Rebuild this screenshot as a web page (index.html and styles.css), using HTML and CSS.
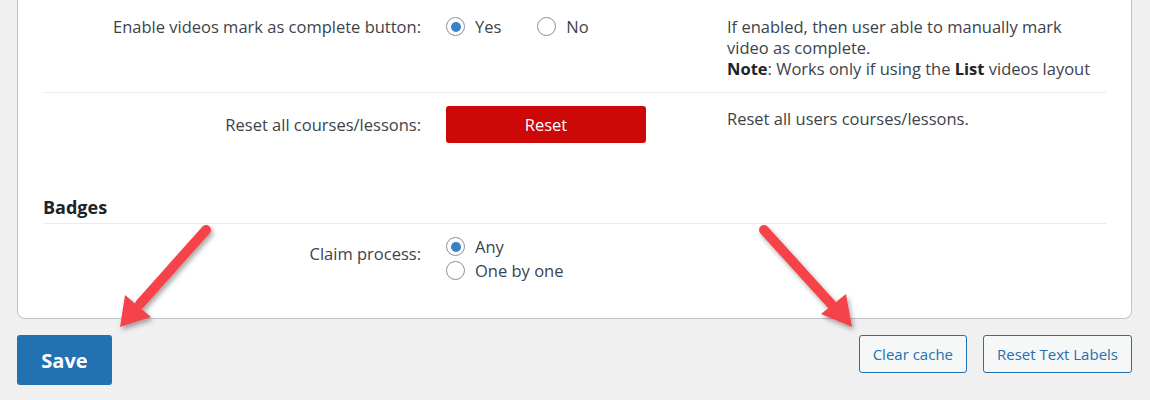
FILE: index.html
```html
<!DOCTYPE html>
<html lang="en">
<head>
    <meta charset="UTF-8">
    <meta name="viewport" content="width=device-width, initial-scale=1.0">
    <title>Settings</title>
    <link rel="stylesheet" href="styles.css">
</head>
<body>
    <div class="wrap">
        <div class="card">
            <!-- Videos -->
            <div class="row row-first">
                <div class="label">Enable videos mark as complete button:</div>
                <div class="control inline">
                    <label class="radio"><span class="dot checked"></span>Yes</label>
                    <label class="radio"><span class="dot"></span>No</label>
                </div>
                <div class="desc">
                    If enabled, then user able to manually mark video as complete.<br>
                    <strong>Note</strong>: Works only if using the <strong>List</strong> videos layout
                </div>
            </div>

            <div class="row row-reset">
                <div class="label">Reset all courses/lessons:</div>
                <div class="control">
                    <button class="btn-danger">Reset</button>
                </div>
                <div class="desc">Reset all users courses/lessons.</div>
            </div>

            <!-- Badges -->
            <h2 class="section-title">Badges</h2>
            <div class="row row-last">
                <div class="label">Claim process:</div>
                <div class="control stacked">
                    <label class="radio"><span class="dot checked"></span>Any</label>
                    <label class="radio"><span class="dot"></span>One by one</label>
                </div>
                <div class="desc"></div>
            </div>
        </div>

        <div class="actions">
            <button class="btn-primary">Save</button>
            <div class="actions-right">
                <button class="btn-secondary">Clear cache</button>
                <button class="btn-secondary">Reset Text Labels</button>
            </div>
        </div>
    </div>

    <svg class="arrows" width="1150" height="400" viewBox="0 0 1150 400">
        <defs>
            <filter id="shadow" x="-30%" y="-30%" width="160%" height="160%">
                <feDropShadow dx="2" dy="3" stdDeviation="2.5" flood-color="#000" flood-opacity="0.35"/>
            </filter>
        </defs>
        <g filter="url(#shadow)" fill="#f64349" stroke="#f64349">
            <line x1="206" y1="230" x2="140" y2="304" stroke-width="10" stroke-linecap="round"/>
            <polygon points="120,327 125,295 151,317" stroke="none"/>
            <line x1="764" y1="230" x2="832" y2="305" stroke-width="10" stroke-linecap="round"/>
            <polygon points="852,327 821,314 846,294" stroke="none"/>
        </g>
    </svg>
</body>
</html>
```

FILE: styles.css
```css
body {
    font-family: "Open Sans", "Noto Sans", sans-serif;
    font-size: 16.5px;
    background-color: #f0f0f1;
    color: #3c434a;
    margin: 0;
}
.wrap {
    padding: 0 18px 0 17px;
}
.card {
    background-color: #fff;
    border: 1px solid #c3c4c7;
    border-top: none;
    border-radius: 0 0 8px 8px;
    padding: 0 25px;
    height: 319px;
    box-sizing: border-box;
}
.row {
    display: grid;
    grid-template-columns: 403px 281px 1fr;
    line-height: 21px;
}
.row-first {
    padding: 16px 0 13px;
    border-bottom: 1px solid #ebebeb;
}
.row-reset {
    padding: 13px 0 0;
}
.row-last {
    padding: 12px 0 0;
}
.label {
    text-align: right;
    padding-right: 25px;
}
.row-reset .label {
    align-self: center;
}
.row-reset .desc {
    padding-top: 2px;
}
.row-last .label {
    padding-top: 7px;
}
.control.inline {
    display: flex;
    align-items: flex-start;
    gap: 36px;
}
.control.stacked {
    display: flex;
    flex-direction: column;
    align-items: flex-start;
    gap: 3px;
}
.radio {
    display: flex;
    align-items: center;
    gap: 10px;
}
.dot {
    width: 19px;
    height: 19px;
    border: 1px solid #8c8f94;
    border-radius: 50%;
    box-sizing: border-box;
    display: inline-flex;
    align-items: center;
    justify-content: center;
    background-color: #fff;
}
.dot.checked::after {
    content: "";
    width: 10px;
    height: 10px;
    border-radius: 50%;
    background-color: #3582c4;
}
.desc strong {
    color: #1d2327;
}
.section-title {
    margin: 52px 0 0;
    font-size: 18px;
    font-weight: 700;
    color: #1d2327;
    line-height: 24px;
    padding-bottom: 4px;
    border-bottom: 1px solid #ebebeb;
}
button {
    font-family: inherit;
    cursor: pointer;
}
.btn-danger {
    width: 200px;
    height: 37px;
    background-color: #cc0808;
    color: #fff;
    border: none;
    border-radius: 3px;
    font-size: 16.5px;
}
.actions {
    display: flex;
    justify-content: space-between;
    align-items: flex-start;
    padding-top: 16px;
}
.actions-right {
    display: flex;
    gap: 16px;
}
.btn-primary {
    width: 95px;
    height: 50px;
    background-color: #2271b1;
    color: #fff;
    border: none;
    border-radius: 3px;
    font-size: 20px;
    font-weight: 700;
}
.btn-secondary {
    height: 38px;
    padding: 0 13px;
    background-color: #f6f7f7;
    color: #2271b1;
    border: 1px solid #2271b1;
    border-radius: 3px;
    font-size: 15px;
}
.arrows {
    position: absolute;
    top: 0;
    left: 0;
    pointer-events: none;
}
```
